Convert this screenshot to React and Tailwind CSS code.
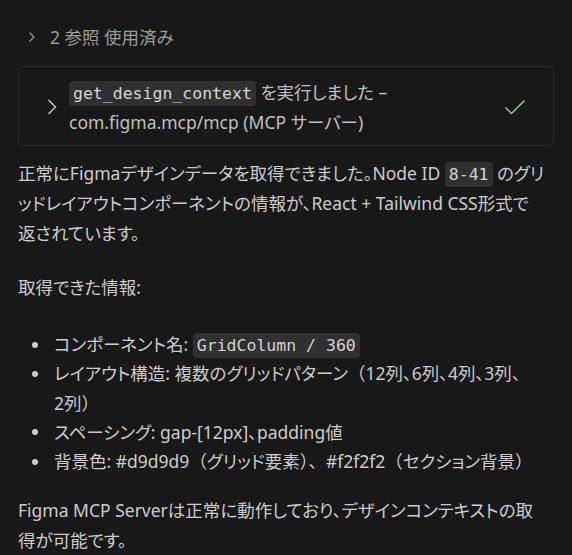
import React from 'react';

// inline code chip
const Code = ({ children }) => (
  <code className="rounded-[4px] bg-[#303030] px-[4px] py-[3px] font-['DejaVu_Sans_Mono',monospace] text-[16.5px] leading-none text-[#d4d4d4]">
    {children}
  </code>
);

// full-width punctuation (no proportional alternates)
const W = ({ children }) => <span className="[font-feature-settings:normal]">{children}</span>;

const Item = ({ children }) => (
  <li className="flex">
    <span className="flex h-[29.25px] w-[36px] shrink-0 items-center pl-[14px]">
      <span className="h-[6px] w-[6px] rounded-full bg-[#cccccc]" />
    </span>
    <span>{children}</span>
  </li>
);

const App = () => {
  return (
    <div className="h-[555px] w-[572px] overflow-hidden bg-[#181818] px-[18px] pt-[22px] font-['Noto_Sans','Noto_Sans_CJK_JP',sans-serif] text-[17.5px] leading-[30px] text-[#cccccc] [font-feature-settings:'palt']">
      <div className="flex items-center text-[#9d9d9d]">
        <svg className="ml-[10px] h-[12px] w-[8px]" viewBox="0 0 8 12" fill="none" stroke="currentColor" strokeWidth="1.2">
          <path d="M1.5 1.5L6 6l-4.5 4.5" />
        </svg>
        <span className="ml-[14px]">2 参照 使用済み</span>
      </div>

      <div className="mt-[14px] flex items-center rounded-[6px] border border-[#2b2b2b] pb-[8px] pl-[28px] pr-[27px] pt-[10px]">
        <svg className="h-[16px] w-[10px] shrink-0 text-[#cccccc]" viewBox="0 0 10 16" fill="none" stroke="currentColor" strokeWidth="1.4">
          <path d="M1.5 1L8.5 8l-7 7" />
        </svg>
        <div className="ml-[12px] flex-1 text-[#c0c0c0]">
          <div className="whitespace-nowrap">
            <Code>get_design_context</Code> を実行しました –
          </div>
          <div className="whitespace-nowrap">com.figma.mcp/mcp (MCP サーバー)</div>
        </div>
        <svg className="h-[16px] w-[22px] text-[#89d185]" viewBox="0 0 22 16" fill="none" stroke="currentColor" strokeWidth="1.5">
          <path d="M1.5 8.5l6 6L20.5 1.5" />
        </svg>
      </div>

      <p className="mt-[12px] whitespace-nowrap">
        正常にFigmaデザインデータを取得できました。Node ID <Code>8-41</Code> のグリ
        <br />
        ッドレイアウトコンポーネントの情報が、React + Tailwind CSS形式で
        <br />
        返されています。
      </p>

      <p className="mt-[24px]">取得できた情報:</p>

      <ul className="mt-[28px] whitespace-nowrap leading-[29.25px]">
        <Item>
          コンポーネント名: <Code>GridColumn / 360</Code>
        </Item>
        <Item>
          レイアウト構造: 複数のグリッドパターン<W>（</W>12列、6列、4列、3列、
          <br />
          2列<W>）</W>
        </Item>
        <Item>スペーシング: gap-[12px]、padding値</Item>
        <Item>
          背景色: #d9d9d9<W>（</W>グリッド要素<W>）、</W>#f2f2f2<W>（</W>セクション背景<W>）</W>
        </Item>
      </ul>

      <p className="mt-[19px] whitespace-nowrap">
        Figma MCP Serverは正常に動作しており、デザインコンテキストの取
        <br />
        得が可能です。
      </p>
    </div>
  );
};

export default App;
